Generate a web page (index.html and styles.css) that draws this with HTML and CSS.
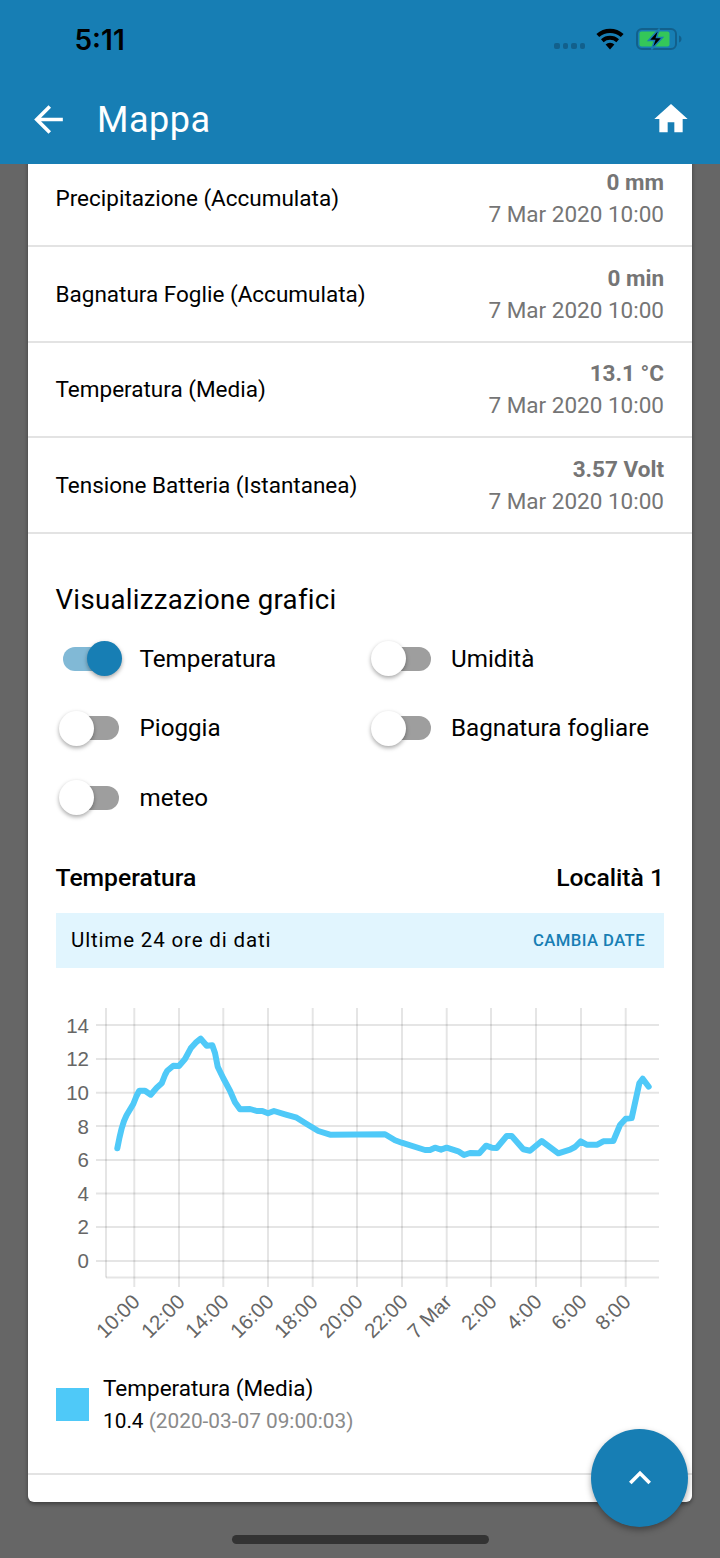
FILE: index.html
```html
<!DOCTYPE html>
<html lang="en">
<head>
    <meta charset="UTF-8">
    <meta name="viewport" content="width=device-width, initial-scale=1.0">
    <title>Mappa</title>
    <link rel="stylesheet" href="styles.css">
</head>
<body>
    <div class="screen">
        <header class="header">
            <div class="status">
                <span class="time">5:11</span>
                <div class="status-icons">
                    <div class="signal"><i></i><i></i><i></i><i></i></div>
                    <svg class="wifi" width="28" height="22" viewBox="0 0 28 22">
                        <path d="M14 21.500 9.600 16.400a6.600 6.600 0 0 1 8.800 0z"/>
                        <path d="M7.600 14.200 5 11.200a13.600 13.600 0 0 1 18 0l-2.600 3a9.600 9.600 0 0 0-12.800 0z"/>
                        <path d="M3.200 9.100.4 5.900a20.600 20.600 0 0 1 27.200 0l-2.800 3.200a16.400 16.400 0 0 0-21.600 0z"/>
                    </svg>
                    <svg class="battery" width="46" height="22" viewBox="0 0 46 22">
                        <rect class="battery-case" x="1" y="1" width="39" height="20" rx="5"/>
                        <rect class="battery-fill" x="3.500" y="3.500" width="30" height="15" rx="2"/>
                        <path class="battery-nub" d="M43 7.500c1.600.3 2.500 1.800 2.500 3.500s-.9 3.200-2.500 3.500z"/>
                        <path class="battery-bolt" d="M23.500.5 12.500 12.500h6l-3 9 11-12h-6z"/>
                    </svg>
                </div>
            </div>
            <div class="toolbar">
                <svg class="icon-back" width="43" height="43" viewBox="0 0 24 24"><path d="M20 11H7.830l5.590-5.590L12 4l-8 8 8 8 1.410-1.410L7.830 13H20v-2z"/></svg>
                <h1 class="toolbar-title">Mappa</h1>
                <svg class="icon-home" width="40" height="40" viewBox="0 0 24 24"><path d="M10 20v-6h4v6h5v-8h3L12 3 2 12h3v8z"/></svg>
            </div>
        </header>

        <main class="content">
            <div class="card">
                <div class="row">
                    <span class="row-name">Precipitazione (Accumulata)</span>
                    <div class="row-data"><strong>0 mm</strong><span>7 Mar 2020 10:00</span></div>
                </div>
                <div class="row">
                    <span class="row-name">Bagnatura Foglie (Accumulata)</span>
                    <div class="row-data"><strong>0 min</strong><span>7 Mar 2020 10:00</span></div>
                </div>
                <div class="row">
                    <span class="row-name">Temperatura (Media)</span>
                    <div class="row-data"><strong>13.1 °C</strong><span>7 Mar 2020 10:00</span></div>
                </div>
                <div class="row">
                    <span class="row-name">Tensione Batteria (Istantanea)</span>
                    <div class="row-data"><strong>3.57 Volt</strong><span>7 Mar 2020 10:00</span></div>
                </div>

                <section class="charts">
                    <h2 class="charts-title">Visualizzazione grafici</h2>
                    <div class="toggles">
                        <div class="toggle-item"><span class="toggle on"></span>Temperatura</div>
                        <div class="toggle-item"><span class="toggle"></span>Umidità</div>
                        <div class="toggle-item"><span class="toggle"></span>Pioggia</div>
                        <div class="toggle-item"><span class="toggle"></span>Bagnatura fogliare</div>
                        <div class="toggle-item"><span class="toggle"></span>meteo</div>
                    </div>

                    <div class="chart-head">
                        <span>Temperatura</span>
                        <span>Località 1</span>
                    </div>
                    <div class="banner">
                        <span>Ultime 24 ore di dati</span>
                        <span class="banner-action">CAMBIA DATE</span>
                    </div>

                    <svg class="chart" width="608" height="360" viewBox="56 1000 608 360">
                        <path class="grid" d="M96 1025H659M96 1059H659M96 1092.700H659M96 1126H659M96 1160H659M96 1193.500H659M96 1227H659M96 1261H659M106 1277.500H659"/>
                        <path class="grid" d="M106 1008V1277.500M134.300 1008V1287M179 1008V1287M223.300 1008V1287M268 1008V1287M312.700 1008V1287M357 1008V1287M402 1008V1287M446.700 1008V1287M491 1008V1287M536 1008V1287M581 1008V1287M625.700 1008V1287"/>

                        <g class="y-labels">
                            <text x="89" y="1033">14</text>
                            <text x="89" y="1066">12</text>
                            <text x="89" y="1100">10</text>
                            <text x="89" y="1134">8</text>
                            <text x="89" y="1167">6</text>
                            <text x="89" y="1201">4</text>
                            <text x="89" y="1234">2</text>
                            <text x="89" y="1268">0</text>
                        </g>
                        <g class="x-labels">
                            <text transform="translate(141 1303) rotate(-45)">10:00</text>
                            <text transform="translate(186 1303) rotate(-45)">12:00</text>
                            <text transform="translate(230 1303) rotate(-45)">14:00</text>
                            <text transform="translate(275 1303) rotate(-45)">16:00</text>
                            <text transform="translate(319 1303) rotate(-45)">18:00</text>
                            <text transform="translate(364 1303) rotate(-45)">20:00</text>
                            <text transform="translate(409 1303) rotate(-45)">22:00</text>
                            <text transform="translate(453 1303) rotate(-45)">7 Mar</text>
                            <text transform="translate(498 1303) rotate(-45)">2:00</text>
                            <text transform="translate(543 1303) rotate(-45)">4:00</text>
                            <text transform="translate(588 1303) rotate(-45)">6:00</text>
                            <text transform="translate(632 1303) rotate(-45)">8:00</text>
                        </g>

                        <polyline class="line" points="117.300,1148.300 119.500,1137.500 121.700,1128.300 124,1121 126.700,1115 133.300,1104 136.500,1096 139.300,1090.700 145,1090.700 150.700,1094.700 156.700,1087.700 161.700,1083.300 165,1075 167.300,1070.700 173.300,1065.700 179,1066 185,1059 190.700,1048.300 195.700,1042.700 200.700,1038.700 206.700,1045.700 212.300,1045.300 215,1053 217.700,1066.700 223.300,1078.300 230,1090.700 235,1102.300 240,1109.300 250,1109 256.700,1111 262.300,1111 268,1113.300 274,1111 285,1114.300 296.700,1117.700 306.700,1124 318.300,1131 330,1134.700 385,1134.300 395,1140.300 401.700,1142.700 425,1150 430,1150 435,1147.700 441,1149.700 446.700,1147.700 458.300,1151.300 464,1155 470,1153 479.300,1153.300 486,1145.700 491.700,1147.700 496.700,1148 506.700,1136 511.700,1136 523.300,1149.300 530,1150.700 541.700,1141 558.300,1153.300 570,1149.700 575,1147 580.700,1141.300 586.700,1144.700 597.300,1144.700 603.300,1141.300 613.300,1141 620,1125 625.700,1118.700 631.700,1118 639.300,1083.300 642.700,1078.700 648.700,1086.700"/>
                    </svg>

                    <div class="legend">
                        <span class="legend-swatch"></span>
                        <div class="legend-text">
                            <div>Temperatura (Media)</div>
                            <div class="legend-value">10.4 <span class="legend-date">(2020-03-07 09:00:03)</span></div>
                        </div>
                    </div>
                </section>

                <div class="card-end"></div>
            </div>
        </main>

        <button class="fab" type="button">
            <svg width="44" height="44" viewBox="0 0 24 24"><path d="M12 8l-6 6 1.410 1.410L12 10.830l4.590 4.580L18 14z"/></svg>
        </button>
        <div class="home-bar"></div>
    </div>
</body>
</html>
```

FILE: styles.css
```css
* {
    box-sizing: border-box;
}

body {
    margin: 0;
    font-family: Roboto, sans-serif;
    color: #000;
}

.screen {
    position: relative;
    display: flex;
    flex-direction: column;
    height: 1558px;
    overflow: hidden;
    background-color: #666;
}

/* header */
.header {
    position: relative;
    z-index: 1;
    flex: none;
    height: 164px;
    background-color: #177eb4;
}

.status {
    display: flex;
    justify-content: space-between;
    align-items: center;
    height: 78px;
    padding: 0 38px 0 74.500px;
}

.time {
    margin-top: 2px;
    font-family: Inter, sans-serif;
    font-size: 28px;
    font-weight: 600;
    color: #000;
}

.status-icons {
    display: flex;
    align-items: center;
}

.signal {
    display: flex;
    gap: 3px;
    margin: 14px 11px 0 0;
}

.signal i {
    width: 5.500px;
    height: 5.500px;
    border-radius: 2px;
    background-color: #12608c;
}

.wifi {
    margin-right: 12px;
}

.battery-case {
    fill: none;
    stroke: #12608c;
    stroke-width: 2;
}

.battery-fill {
    fill: #34c759;
}

.battery-nub {
    fill: #12608c;
}

.battery-bolt {
    fill: #000;
    stroke: #177eb4;
    stroke-width: 1.500;
}

.toolbar {
    display: flex;
    align-items: center;
    height: 86px;
    padding: 0 29px 4px 27px;
}

.icon-back,
.icon-home {
    fill: #fff;
}

.toolbar-title {
    flex: 1;
    margin: 2px 0 0 27px;
    font-size: 36px;
    font-weight: 400;
    color: #fff;
    letter-spacing: 0.5px;
}

/* card */
.content {
    flex: 1;
    padding: 0 28px;
    overflow: hidden;
}

.card {
    margin-top: -12.500px;
    border-radius: 6px;
    background-color: #fff;
    box-shadow: 0 2px 4px rgba(0, 0, 0, 0.4);
}

.row {
    display: flex;
    justify-content: space-between;
    align-items: center;
    height: 95.500px;
    padding: 0 28px 0 27.500px;
    border-bottom: 2px solid #e3e3e3;
    font-size: 22.500px;
}

.row-data {
    display: flex;
    flex-direction: column;
    align-items: flex-end;
    gap: 6px;
    color: #757575;
}

/* charts */
.charts {
    padding: 48px 28px 0 27.500px;
}

.charts-title {
    margin: 0;
    font-size: 27.600px;
    font-weight: 400;
    line-height: 36px;
    letter-spacing: 0.3px;
}

.toggles {
    display: grid;
    grid-template-columns: 311.500px 1fr;
    grid-auto-rows: 69.500px;
    margin-top: 6.500px;
    font-size: 24.200px;
}

.toggle-item {
    display: flex;
    align-items: center;
    gap: 20.500px;
}

.toggle {
    position: relative;
    width: 56px;
    height: 24px;
    margin-left: 7.500px;
    border-radius: 12px;
    background-color: #9e9e9e;
}

.toggle.on {
    background-color: #81b9d6;
}

.toggle::after {
    content: "";
    position: absolute;
    top: -5.500px;
    left: -4px;
    width: 35px;
    height: 35px;
    border-radius: 50%;
    background-color: #fff;
    box-shadow: 0 2px 4px rgba(0, 0, 0, 0.35);
}

.toggle.on::after {
    left: 24px;
    background-color: #177eb4;
}

.chart-head {
    display: flex;
    justify-content: space-between;
    margin-top: 31px;
    font-size: 24.700px;
    font-weight: 500;
    line-height: 28px;
}

.banner {
    display: flex;
    justify-content: space-between;
    align-items: center;
    width: 608px;
    margin-left: 0.500px;
    height: 55px;
    margin-top: 21px;
    padding: 0 19px 0 15px;
    background-color: #e1f5fe;
    font-size: 20.500px;
    letter-spacing: 0.85px;
}

.banner-action {
    font-size: 16.700px;
    font-weight: 500;
    letter-spacing: 0.4px;
    color: #177eb4;
}

.chart {
    display: block;
    margin-top: 32px;
    margin-left: 0.500px;
}

.grid {
    fill: none;
    stroke: rgba(0, 0, 0, 0.1);
    stroke-width: 2;
}

.y-labels text,
.x-labels text {
    font-family: "Liberation Sans", sans-serif;
    font-size: 20.500px;
    fill: #666;
    text-anchor: end;
}

.line {
    fill: none;
    stroke: #4fc9f8;
    stroke-width: 6;
    stroke-linejoin: round;
    stroke-linecap: round;
}

.legend {
    display: flex;
    align-items: center;
    gap: 14px;
    margin-top: 15.500px;
    margin-left: 0.500px;
    font-size: 22.500px;
}

.legend-swatch {
    width: 33px;
    height: 33px;
    background-color: #4fc9f8;
}

.legend-text {
    display: flex;
    flex-direction: column;
    gap: 8px;
}

.legend-value {
    font-size: 20.800px;
}

.legend-date {
    color: #8a8a8a;
}

.card-end {
    height: 29px;
    margin-top: 39.500px;
    border-top: 2px solid #e3e3e3;
}

/* floating */
.fab {
    position: absolute;
    left: 591px;
    top: 1429px;
    display: flex;
    justify-content: center;
    align-items: center;
    width: 97px;
    height: 98px;
    padding: 0;
    border: 0;
    border-radius: 50%;
    background-color: #177eb4;
    box-shadow: 0 3px 6px rgba(0, 0, 0, 0.35);
}

.fab svg {
    fill: #fff;
}

.home-bar {
    position: absolute;
    left: 232px;
    top: 1535px;
    width: 257px;
    height: 9px;
    border-radius: 5px;
    background-color: #333;
}
```
